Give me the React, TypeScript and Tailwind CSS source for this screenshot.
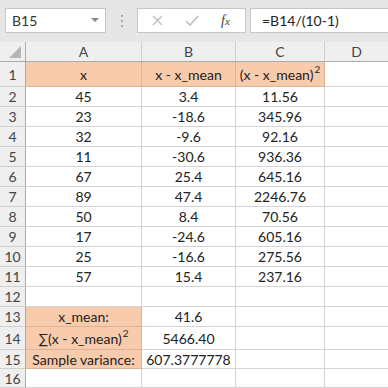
import React from 'react';

const font = { fontFamily: 'Lato, "Open Sans", sans-serif' };

type Cell = { v?: React.ReactNode; fill?: boolean };

const sq = <sup className="relative -top-[5px] ml-[1px] text-[10px]">2</sup>;

const rows: { n: number; h: string; cells: Cell[] }[] = [
    { n: 1, h: 'h-[25px]', cells: [{ v: 'x', fill: true }, { v: 'x - x_mean', fill: true }, { v: <>(x - x_mean){sq}</>, fill: true }] },
    { n: 2, h: 'h-[20px]', cells: [{ v: '45' }, { v: '3.4' }, { v: '11.56' }] },
    { n: 3, h: 'h-[20px]', cells: [{ v: '23' }, { v: '-18.6' }, { v: '345.96' }] },
    { n: 4, h: 'h-[20px]', cells: [{ v: '32' }, { v: '-9.6' }, { v: '92.16' }] },
    { n: 5, h: 'h-[20px]', cells: [{ v: '11' }, { v: '-30.6' }, { v: '936.36' }] },
    { n: 6, h: 'h-[20px]', cells: [{ v: '67' }, { v: '25.4' }, { v: '645.16' }] },
    { n: 7, h: 'h-[20px]', cells: [{ v: '89' }, { v: '47.4' }, { v: '2246.76' }] },
    { n: 8, h: 'h-[20px]', cells: [{ v: '50' }, { v: '8.4' }, { v: '70.56' }] },
    { n: 9, h: 'h-[20px]', cells: [{ v: '17' }, { v: '-24.6' }, { v: '605.16' }] },
    { n: 10, h: 'h-[20px]', cells: [{ v: '25' }, { v: '-16.6' }, { v: '275.56' }] },
    { n: 11, h: 'h-[20px]', cells: [{ v: '57' }, { v: '15.4' }, { v: '237.16' }] },
    { n: 12, h: 'h-[20px]', cells: [{}, {}, {}] },
    { n: 13, h: 'h-[20px]', cells: [{ v: 'x_mean:', fill: true }, { v: '41.6' }, {}] },
    { n: 14, h: 'h-[23px]', cells: [{ v: <>∑(x - x_mean){sq}</>, fill: true }, { v: '5466.40' }, {}] },
    { n: 15, h: 'h-[19px]', cells: [{ v: 'Sample variance:', fill: true }, { v: '607.3777778' }, {}] },
    { n: 16, h: 'h-[19px]', cells: [{}, {}, {}] },
];

const widths = ['w-[116px]', 'w-[94px]', 'w-[89px]'];

export default function App() {
    return (
        <div className="w-[388px] h-[388px] overflow-hidden bg-white text-[14px] text-[#222]" style={font}>
            {/* formula bar */}
            <div className="flex h-[42px] items-start bg-[#e6e6e6] pt-[8px] pl-[5px]">
                <div className="flex h-[25px] w-[101px] items-center justify-between border border-[#c6c6c6] bg-white pl-[6px] pr-[6px]">
                    <span className="text-[#333]">B15</span>
                    <svg width="8" height="5" viewBox="0 0 8 5">
                        <path d="M0 0h8L4 4z" fill="#888" />
                    </svg>
                </div>
                <div className="flex h-[25px] w-[31px] flex-col items-center justify-center gap-[3px]">
                    <span className="h-[2px] w-[2px] bg-[#aaa]" />
                    <span className="h-[2px] w-[2px] bg-[#aaa]" />
                    <span className="h-[2px] w-[2px] bg-[#aaa]" />
                </div>
                <div className="flex h-[25px] w-[109px] items-center border border-[#c6c6c6] bg-white">
                    <svg className="ml-[14px]" width="11" height="11" viewBox="0 0 11 11">
                        <path d="M1 1l9 9M10 1l-9 9" stroke="#bdbdbd" strokeWidth="1.4" />
                    </svg>
                    <svg className="ml-[22px]" width="14" height="11" viewBox="0 0 14 11">
                        <path d="M1 6l4 4 8-9" stroke="#bdbdbd" strokeWidth="1.6" fill="none" />
                    </svg>
                    <span className="ml-[22px] text-[#444] italic" style={{ fontFamily: '"Liberation Serif", serif', fontSize: 14 }}>
                        f<span className="text-[11px]">x</span>
                    </span>
                </div>
                <div className="ml-[4px] flex h-[25px] flex-1 items-center border border-r-0 border-[#c6c6c6] bg-white pl-[11px]">
                    <span className="text-[#222]">=B14/(10-1)</span>
                </div>
            </div>

            {/* column headers */}
            <div className="flex h-[20px] bg-[#efefef] text-[#444] border-b border-[#ababab]">
                <div className="relative w-[26px] shrink-0 border-r border-[#ababab]">
                    <svg className="absolute right-[4px] bottom-[3px]" width="12" height="12" viewBox="0 0 12 12">
                        <path d="M12 0V12H0z" fill="#b5b5b5" />
                    </svg>
                </div>
                {['A', 'B', 'C'].map((c, i) => (
                    <div key={c} className={`${widths[i]} shrink-0 flex items-center justify-center border-r border-[#d0d0d0]`}>
                        {c}
                    </div>
                ))}
                <div className="w-[63px] shrink-0 flex items-center justify-center">D</div>
            </div>

            {/* rows */}
            {rows.map((r) => (
                <div key={r.n} className={`flex ${r.h}`}>
                    <div className="w-[26px] shrink-0 flex items-center justify-center bg-[#efefef] text-[#444] border-r border-b border-[#ababab] border-b-[#d0d0d0]">
                        {r.n}
                    </div>
                    {r.cells.map((c, i) => (
                        <div
                            key={i}
                            className={`${widths[i]} shrink-0 flex items-center justify-center whitespace-nowrap border-r border-b ${
                                c.fill ? 'bg-[#f8cbad] border-[#d9b497]' : 'border-[#d4d4d4]'
                            }`}
                        >
                            {c.v}
                        </div>
                    ))}
                    <div className="flex-1 border-b border-[#d4d4d4]" />
                </div>
            ))}
        </div>
    );
}
